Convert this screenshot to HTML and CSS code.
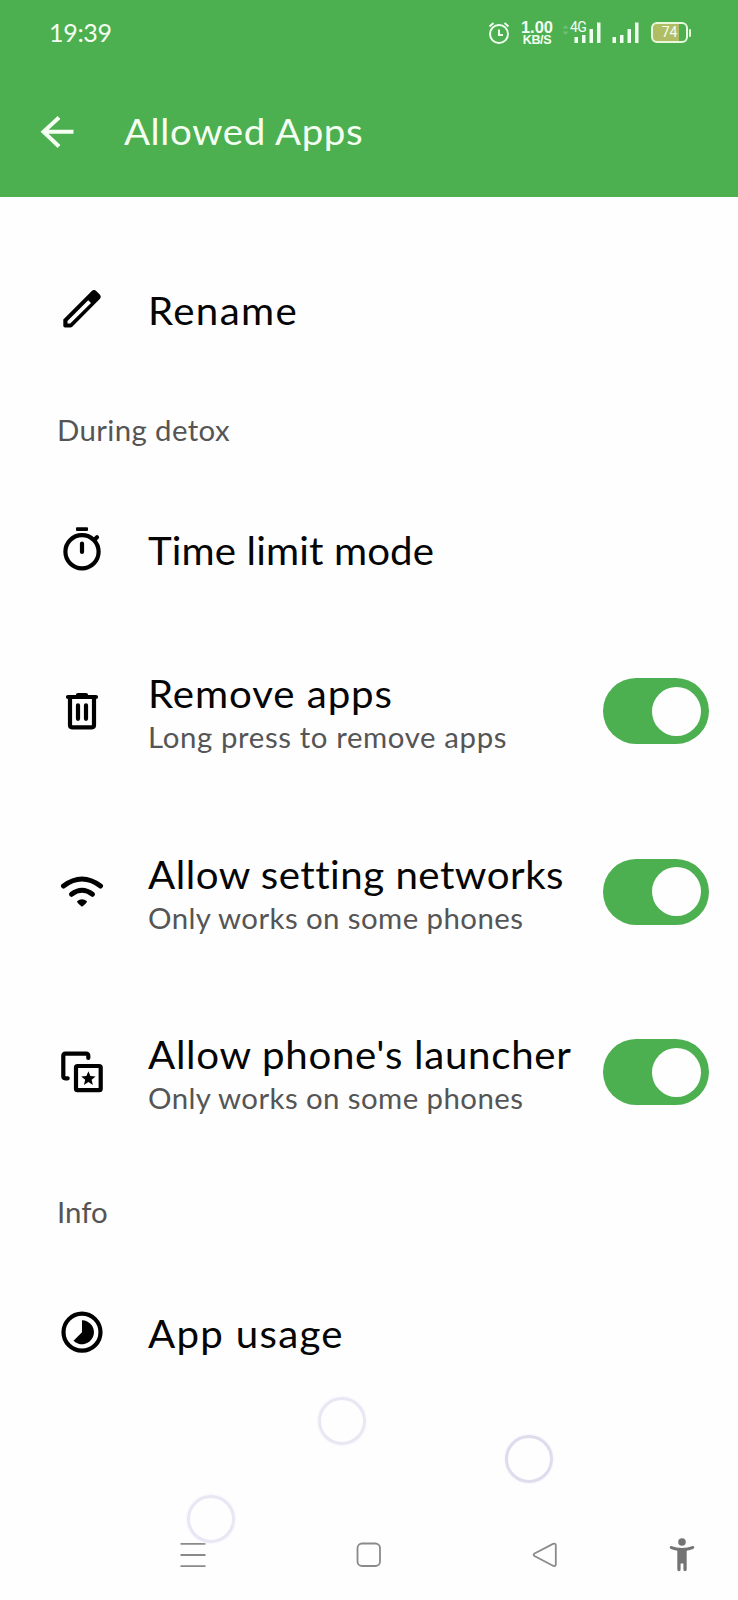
FILE: index.html
```html
<!DOCTYPE html>
<html lang="en">
<head>
<meta charset="utf-8">
<title>Allowed Apps</title>
<link rel="stylesheet" href="styles.css">
</head>
<body>
<div class="screen">
  <header class="header">
    <div class="status">
      <span class="clock">19:39</span>
      <svg class="alarm" viewBox="0 0 24 26"><circle cx="12" cy="14" r="9"/><path d="M12 9.5V15h4M2.5 6.5L6.5 3M21.5 6.5L17.5 3"/></svg>
      <div class="speed"><span class="rate">1.00</span><span class="unit">KB/S</span></div>
      <div class="network">
        <svg class="signal-data" viewBox="0 0 40 24"><path class="faint" d="M.5 7.5L3.5 4l3 3.5zM.5 10.5l3 3.500 3-3.500z"/><path d="M12.500 16h3.500v6h-3.500zM20 14h3.500v8H20zM27.500 8h3.500v14h-3.500zM35 1.500h3.500V22H35z"/></svg>
        <span class="gen">4G</span>
      </div>
      <svg class="signal" viewBox="0 0 28 24"><path d="M.5 16H4v6H.5zM8 14h3.500v8H8zM15.500 8H19v14h-3.500zM23 1.500h3.500V22H23z"/></svg>
      <div class="battery"><span class="charge">74</span></div>
    </div>
    <div class="toolbar">
      <svg class="back" viewBox="0 0 36 36"><path d="M33.500 17.800H3M19 3.500L3.500 17.800 19 32.500"/></svg>
      <h1 class="title">Allowed Apps</h1>
    </div>
  </header>

  <main class="list">
    <div class="row">
      <svg class="icon" viewBox="0 0 56 56"><path class="fill" fill-rule="evenodd" d="M9.300 36.500L35.500 10.200l2-2q2.500-2.200 5 0l3 3q2.500 2.500 0 5L18.500 43.500q-1 1-2.200 1H11q-1.700 0-1.700-1.700zM13.500 38v2.500H16.200L37 20l-2.800-2.800z"/></svg>
      <span class="name n-rename">Rename</span>
    </div>
    <h2 class="section s-detox"><span class="caption">During detox</span></h2>
    <div class="row time">
      <svg class="icon" viewBox="0 0 56 56"><circle cx="28" cy="28.700" r="16.600"/><path d="M28 20.500V29M41 16.300l2-2"/><path class="fill" d="M23 4.300h10q1 0 1 1V7q0 1-1 1H23q-1 0-1-1V5.300q0-1 1-1z"/></svg>
      <span class="name n-time">Time limit mode</span>
    </div>
    <div class="row tall">
      <svg class="icon" viewBox="0 0 56 56"><path d="M14 14h28M24 12h8M16 14v28.300q0 2 2 2h20q2 0 2-2V14M24 22.300v13.500M32 22.300v13.500"/></svg>
      <div class="labels"><span class="name n-remove">Remove apps</span><span class="hint h-press">Long press to remove apps</span></div>
      <span class="toggle"><span class="knob"></span></span>
    </div>
    <div class="row tall">
      <svg class="icon" viewBox="0 0 56 56"><path class="wide" d="M9.500 22Q28 8 46.500 22M17.500 30.300Q28 22.300 38.500 30.300"/><path class="fill" d="M23 37.300Q28 33.300 33 37.300 33 39 28 42.800 23 39 23 37.300z"/></svg>
      <div class="labels"><span class="name n-networks">Allow setting networks</span><span class="hint h-works">Only works on some phones</span></div>
      <span class="toggle"><span class="knob"></span></span>
    </div>
    <div class="row tall">
      <svg class="icon" viewBox="0 0 56 56"><path d="M34.300 14V11.700q0-2-2-2h-21q-2 0-2 2v20.600q0 2 2 2h2.400"/><rect x="22" y="22" width="24.700" height="24.200" rx="1.500"/><path class="fill" d="M34.400 27.200l2 4.800 5.200.4-4 3.400 1.300 5.100-4.500-2.800-4.500 2.800 1.300-5.100-4-3.400 5.200-.4z"/></svg>
      <div class="labels"><span class="name n-launcher">Allow phone's launcher</span><span class="hint h-works">Only works on some phones</span></div>
      <span class="toggle"><span class="knob"></span></span>
    </div>
    <h2 class="section s-info"><span class="caption">Info</span></h2>
    <div class="row">
      <svg class="icon" viewBox="0 0 56 56"><circle cx="28" cy="27.200" r="18.500"/><path class="fill" d="M28 27.200V15.200A12 12 0 1 1 19.500 35.700z"/></svg>
      <span class="name n-usage">App usage</span>
    </div>
  </main>

  <nav class="nav">
    <svg class="menu" viewBox="0 0 26 26"><path d="M.5 1.800h25M.5 13h25M.5 24.200h25"/></svg>
    <svg class="home" viewBox="0 0 26 26"><rect x="1.500" y="1.500" width="22.500" height="22.500" rx="4.500"/></svg>
    <svg class="prev" viewBox="0 0 26 26"><path d="M2.500 11.500L21 1.900q2.800-1 2.800 1.500v18.800q0 2.600-2.800 1.500L2.500 14q-1.800-1.200 0-2.500z"/></svg>
    <svg class="person" viewBox="0 0 26 34"><circle cx="13" cy="4" r="3.800"/><path d="M2.200 7.900Q13 12.200 23.800 7.900q1.400 0 1.500 1.300 0 1.300-1.200 1.700Q21 12.200 17.700 12.700V31.500q-.2 1.700-1.700 1.700t-1.600-1.700V25.500H11.600v6q-.1 1.700-1.600 1.700t-1.700-1.700V12.700Q5 12.200 1.900 10.900.7 10.500.7 9.200.8 7.900 2.200 7.900z"/></svg>
  </nav>
  <span class="bubble b1"></span>
  <span class="bubble b2"></span>
  <span class="bubble b3"></span>
</div>
</body>
</html>
```

FILE: styles.css
```css
* { box-sizing: border-box; }
body { margin: 0; background: #fefefe; font-family: Lato, "Open Sans", sans-serif; }
svg { display: block; flex: none; fill: none; }
.screen { position: relative; width: 738px; height: 1600px; overflow: hidden; display: flex; flex-direction: column; }

.header { height: 197px; background: #4caf50; color: #f4fff2; flex: none; }
.status { height: 66px; display: flex; align-items: center; padding-left: 49px; }
.clock { width: 438px; padding-bottom: 2px; font: 400 25px/30px Lato, sans-serif; letter-spacing: -0.300px; }
.alarm { width: 24px; height: 26px; stroke: #f0fff0; stroke-width: 2; }
.speed { width: 36px; margin-left: 8px; display: flex; flex-direction: column; align-items: center; font-family: "Liberation Sans", sans-serif; font-weight: 700; }
.rate { font-size: 16.500px; line-height: 14px; }
.unit { font-size: 12.500px; line-height: 13px; letter-spacing: -0.300px; }
.network { position: relative; margin-left: 7px; }
.signal-data { width: 40px; height: 24px; fill: #f0fff0; }
.faint { fill: #70c073; }
.gen { position: absolute; left: 8px; top: 0; font: 400 14px/13px Roboto, sans-serif; letter-spacing: -0.500px; }
.signal { width: 28px; height: 24px; margin-left: 10px; fill: #f0fff0; }
.battery { position: relative; width: 37px; height: 21px; margin: -1px 0 0 11px; border: 2px solid #e9f8dc; border-radius: 6px; background: linear-gradient(90deg, #b0bd65 26px, #4caf50 26px); text-align: center; }
.battery::after { content: ""; position: absolute; left: 36px; top: 5px; width: 2px; height: 8px; border-radius: 1px; background: #e9f8dc; }
.charge { display: block; font: 400 14px/17px Roboto, sans-serif; }
.toolbar { height: 131px; display: flex; align-items: center; padding-left: 40px; }
.back { width: 36px; height: 36px; stroke: #f4fff2; stroke-width: 4; }
.title { margin: 0 0 1px 48px; font-weight: 400; font-size: 37px; line-height: 44px; letter-spacing: 0.600px; transform: scaleX(1.040); transform-origin: left; }

.list { padding-top: 54px; color: #050505; }
.row { height: 120px; padding: 0 29px 0 54px; display: flex; align-items: center; }
.row.time { margin-bottom: 10px; }
.row.tall { height: 180.500px; }
.icon { width: 56px; height: 56px; margin-right: 38px; stroke: #000; stroke-width: 4.200; stroke-linecap: round; stroke-linejoin: round; }
.icon .fill { fill: #000; stroke: none; }
.icon .wide { stroke-width: 5; }
/* Labels are set slightly extended */
.name, .hint, .caption { white-space: nowrap; transform-origin: left; }
.name { padding-bottom: 3px; font-size: 38px; line-height: 46px; transform: scaleX(1.060); }
.labels { display: flex; flex-direction: column; padding-top: 5px; }
.labels .name { padding-bottom: 0; margin-bottom: 1px; }
.n-rename { letter-spacing: 1.250px; }
.n-time { letter-spacing: 0.100px; }
.n-remove { letter-spacing: 0.850px; }
.n-networks { letter-spacing: 0.450px; }
.n-launcher { letter-spacing: 0.650px; }
.name.n-usage { letter-spacing: 1.200px; padding-bottom: 0; }
.hint, .caption { font-size: 28px; line-height: 40px; color: #555; transform: scaleX(1.050); }
.h-press { letter-spacing: 0.580px; }
.h-works { letter-spacing: 0.400px; }
.section { margin: 0; padding: 0 0 3px 57px; font-weight: 400; display: flex; align-items: center; }
.s-detox { height: 120px; letter-spacing: 0.350px; }
.s-info { height: 102px; margin-bottom: 8px; }
.toggle { width: 106px; height: 66px; margin-left: auto; padding-right: 8px; border-radius: 33px; background: #4caf50; display: flex; align-items: center; justify-content: flex-end; flex: none; }
.knob { width: 49px; height: 49px; border-radius: 50%; background: #fefefe; }

.nav { height: 90px; margin-top: auto; padding-left: 179.500px; display: flex; align-items: center; stroke: #8a8a8a; stroke-width: 1.800; flex: none; }
.menu, .home, .prev { width: 26px; height: 26px; }
.home { margin-left: 150px; }
.prev { margin-left: 150.500px; }
.person { width: 26px; height: 34px; margin-left: 110.500px; fill: #747474; stroke: none; }
.bubble { position: absolute; width: 48px; height: 48px; border: 3px solid #e9e7f4; border-radius: 50%; box-shadow: 0 0 3px #f0effa; }
.b1 { left: 318px; top: 1397px; }
.b2 { left: 505px; top: 1435px; border-color: #dfdced; }
.b3 { left: 187px; top: 1495px; }
```
